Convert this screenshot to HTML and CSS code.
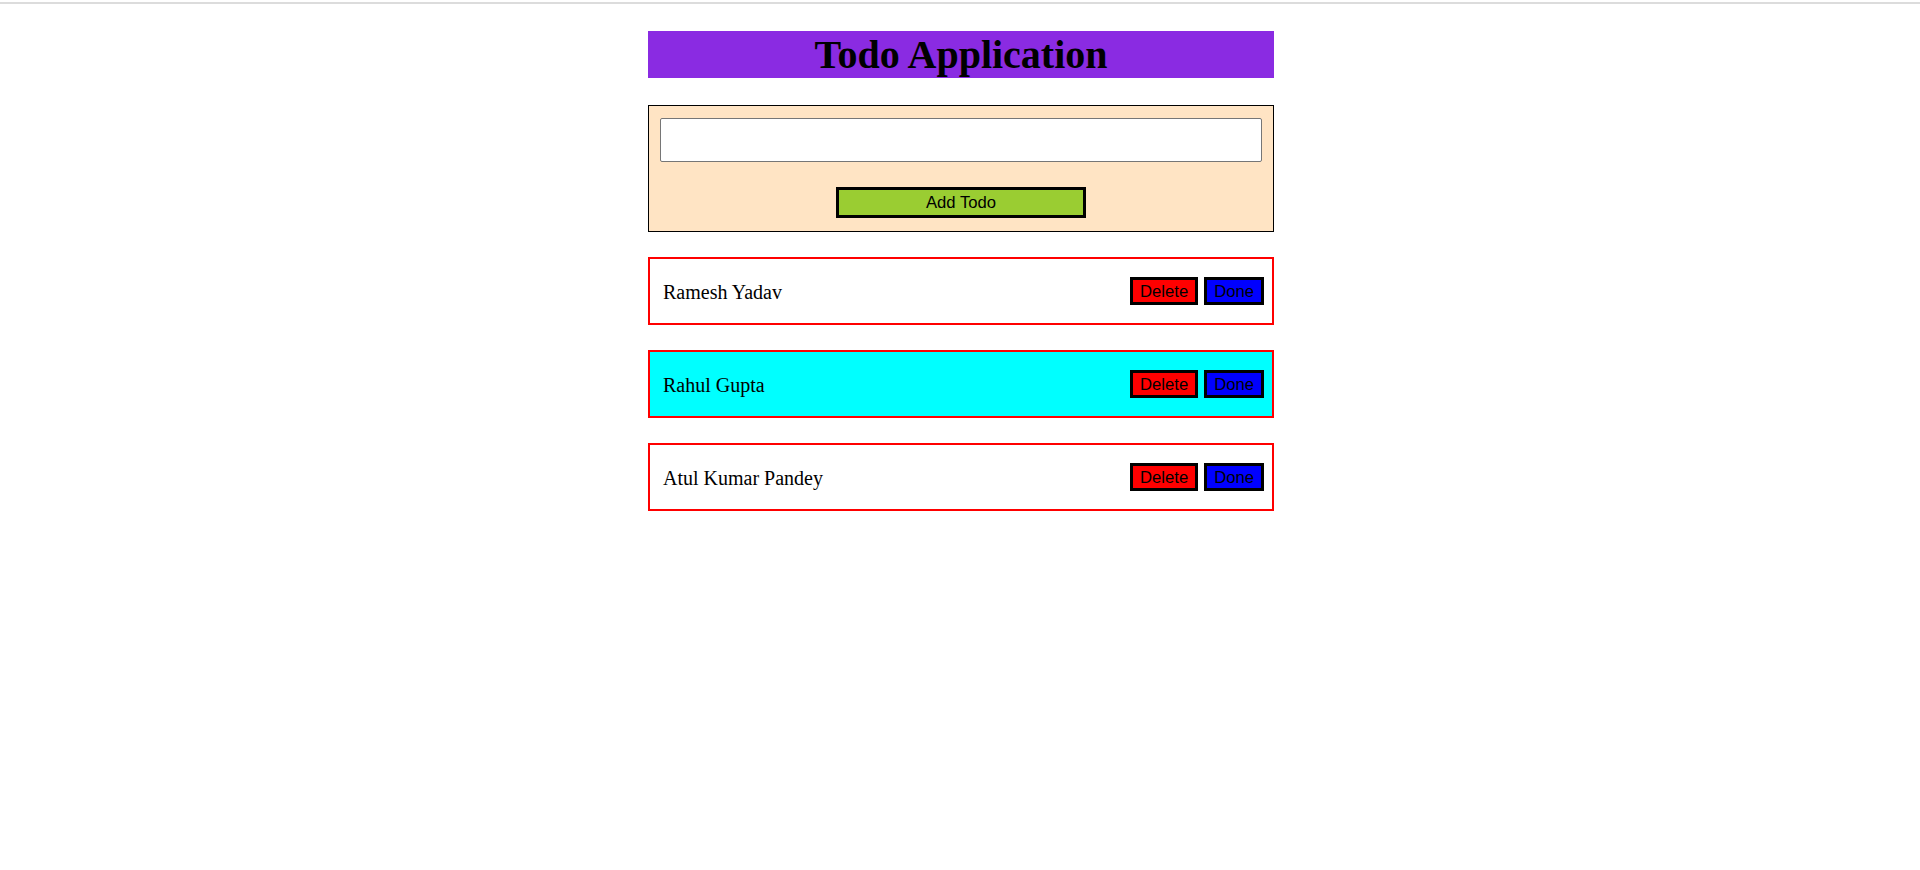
FILE: index.html
```html
<!DOCTYPE html>
<html lang="en">
<head>
<meta charset="utf-8">
<title>Todo Application</title>
<link rel="stylesheet" href="styles.css">
</head>
<body>
<div class="topline"></div>
<div class="app">
  <h1 class="title">Todo Application</h1>
  <form class="todo-form">
    <input class="todo-input" type="text">
    <button class="add-btn" type="button">Add Todo</button>
  </form>
  <div class="list">
    <div class="item">
      <span class="name">Ramesh Yadav</span>
      <div class="actions"><button class="btn del" type="button">Delete</button><button class="btn done" type="button">Done</button></div>
    </div>
    <div class="item item-done">
      <span class="name">Rahul Gupta</span>
      <div class="actions"><button class="btn del" type="button">Delete</button><button class="btn done" type="button">Done</button></div>
    </div>
    <div class="item">
      <span class="name">Atul Kumar Pandey</span>
      <div class="actions"><button class="btn del" type="button">Delete</button><button class="btn done" type="button">Done</button></div>
    </div>
  </div>
</div>
</body>
</html>
```
FILE: styles.css
```css
html, body {
  margin: 0;
  padding: 0;
  background: #fff;
}
body {
  font-family: "Liberation Serif", "Times New Roman", serif;
  color: #000;
  padding-left: 2px;
}
.topline {
  height: 2px;
  margin-top: 2px;
  margin-left: -2px;
  background: #dcdcdc;
}
.app {
  width: 626px;
  margin: 27px auto 0;
}
.title {
  margin: 0;
  height: 47px;
  line-height: 47px;
  font-size: 40px;
  font-weight: bold;
  text-align: center;
  background: #8a2be2;
}
.todo-form {
  margin: 27px 0 0;
  border: 1px solid #000;
  background: #ffe4c4;
  padding: 12px 11px 13px;
  display: flex;
  flex-direction: column;
  align-items: center;
  gap: 25px;
}
.todo-input {
  box-sizing: border-box;
  width: 100%;
  height: 44px;
  margin: 0;
  border: 1px solid #767676;
  border-radius: 2px;
  background: #fff;
  font-size: 17px;
}
.add-btn {
  box-sizing: border-box;
  width: 250px;
  height: 31px;
  margin: 0;
  padding: 0;
  background: #9acd32;
  border: 3px solid #000;
  font-family: "Liberation Sans", Arial, sans-serif;
  font-size: 16.67px;
  color: #000;
}
.list {
  margin-top: 25px;
  display: flex;
  flex-direction: column;
  gap: 25px;
}
.item {
  box-sizing: border-box;
  height: 68px;
  border: 2px solid #ff0000;
  display: flex;
  align-items: center;
  justify-content: space-between;
  padding: 0 8px 0 13px;
}
.item-done {
  background: #00ffff;
}
.name {
  font-size: 20px;
  padding-top: 2px;
}
.actions {
  display: flex;
  gap: 6px;
}
.btn {
  box-sizing: border-box;
  height: 28px;
  margin: 0;
  padding: 1px 7px 0;
  border: 3px solid #000;
  font-family: "Liberation Sans", Arial, sans-serif;
  font-size: 16.67px;
  color: #000;
}
.del {
  background: #ff0000;
}
.done {
  background: #0000ff;
}
```
